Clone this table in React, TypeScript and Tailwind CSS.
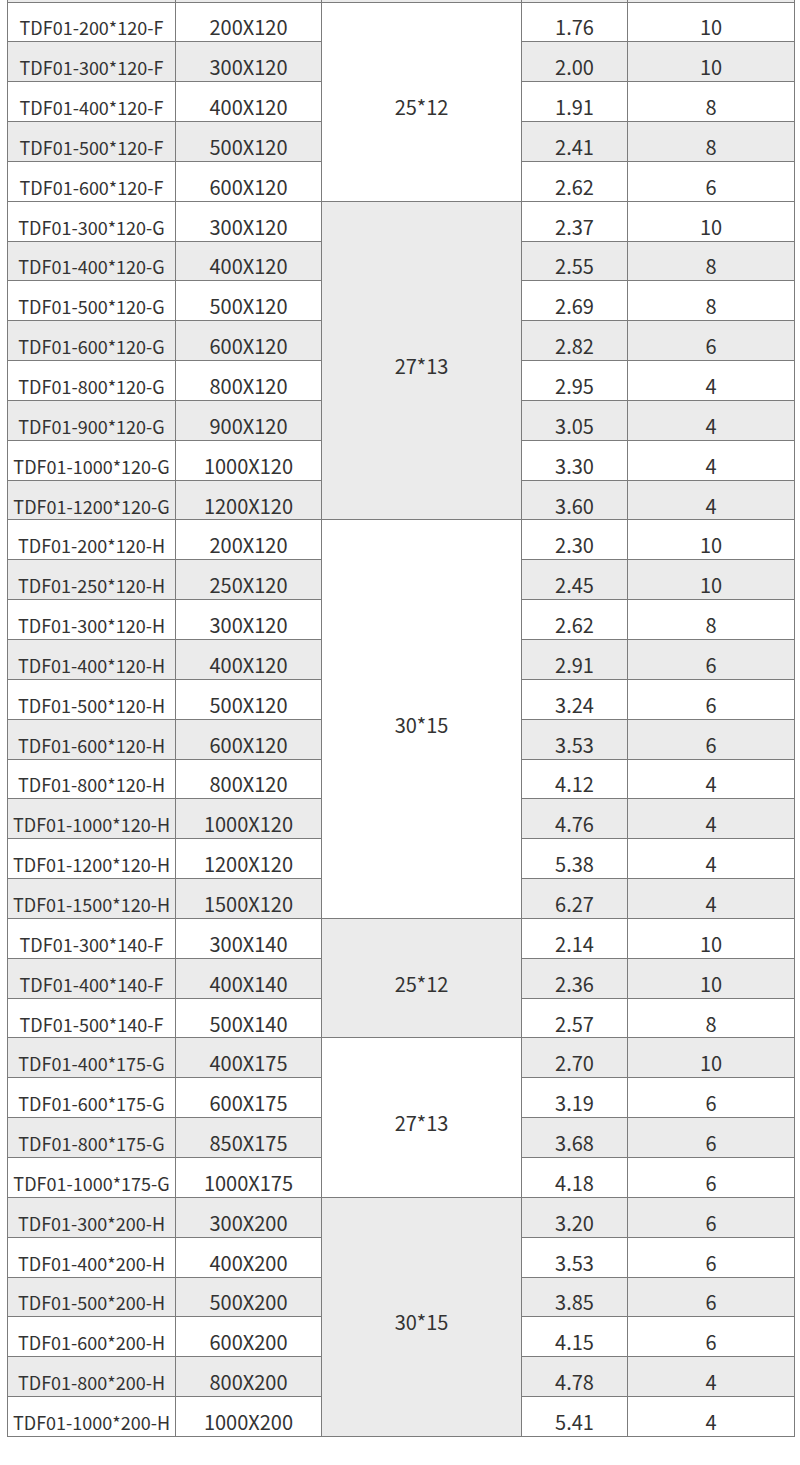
import React from 'react';

type Row = { model: string; size: string; weight: string; qty: string; gray: boolean };
type Group = { section: string; gray: boolean; rows: Row[] };

const r = (model: string, size: string, weight: string, qty: string, gray: boolean): Row => ({
  model,
  size,
  weight,
  qty,
  gray,
});

const groups: Group[] = [
  {
    section: '25*12',
    gray: false,
    rows: [
      r('TDF01-200*120-F', '200X120', '1.76', '10', false),
      r('TDF01-300*120-F', '300X120', '2.00', '10', true),
      r('TDF01-400*120-F', '400X120', '1.91', '8', false),
      r('TDF01-500*120-F', '500X120', '2.41', '8', true),
      r('TDF01-600*120-F', '600X120', '2.62', '6', false),
    ],
  },
  {
    section: '27*13',
    gray: true,
    rows: [
      r('TDF01-300*120-G', '300X120', '2.37', '10', false),
      r('TDF01-400*120-G', '400X120', '2.55', '8', true),
      r('TDF01-500*120-G', '500X120', '2.69', '8', false),
      r('TDF01-600*120-G', '600X120', '2.82', '6', true),
      r('TDF01-800*120-G', '800X120', '2.95', '4', false),
      r('TDF01-900*120-G', '900X120', '3.05', '4', true),
      r('TDF01-1000*120-G', '1000X120', '3.30', '4', false),
      r('TDF01-1200*120-G', '1200X120', '3.60', '4', true),
    ],
  },
  {
    section: '30*15',
    gray: false,
    rows: [
      r('TDF01-200*120-H', '200X120', '2.30', '10', false),
      r('TDF01-250*120-H', '250X120', '2.45', '10', true),
      r('TDF01-300*120-H', '300X120', '2.62', '8', false),
      r('TDF01-400*120-H', '400X120', '2.91', '6', true),
      r('TDF01-500*120-H', '500X120', '3.24', '6', false),
      r('TDF01-600*120-H', '600X120', '3.53', '6', true),
      r('TDF01-800*120-H', '800X120', '4.12', '4', false),
      r('TDF01-1000*120-H', '1000X120', '4.76', '4', true),
      r('TDF01-1200*120-H', '1200X120', '5.38', '4', false),
      r('TDF01-1500*120-H', '1500X120', '6.27', '4', true),
    ],
  },
  {
    section: '25*12',
    gray: true,
    rows: [
      r('TDF01-300*140-F', '300X140', '2.14', '10', false),
      r('TDF01-400*140-F', '400X140', '2.36', '10', true),
      r('TDF01-500*140-F', '500X140', '2.57', '8', false),
    ],
  },
  {
    section: '27*13',
    gray: false,
    rows: [
      r('TDF01-400*175-G', '400X175', '2.70', '10', true),
      r('TDF01-600*175-G', '600X175', '3.19', '6', false),
      r('TDF01-800*175-G', '850X175', '3.68', '6', true),
      r('TDF01-1000*175-G', '1000X175', '4.18', '6', false),
    ],
  },
  {
    section: '30*15',
    gray: true,
    rows: [
      r('TDF01-300*200-H', '300X200', '3.20', '6', true),
      r('TDF01-400*200-H', '400X200', '3.53', '6', false),
      r('TDF01-500*200-H', '500X200', '3.85', '6', true),
      r('TDF01-600*200-H', '600X200', '4.15', '6', false),
      r('TDF01-800*200-H', '800X200', '4.78', '4', true),
      r('TDF01-1000*200-H', '1000X200', '5.41', '4', false),
    ],
  },
];

const cell = 'border border-[#7c7c7c] p-0 pt-[11px] text-center align-middle leading-none';

export default function App() {
  return (
    <div
      className="w-[800px] h-[1465px] bg-white pl-[7px] text-[20px] text-[#333]"
      style={{ fontFamily: '"Noto Sans CJK SC", "Noto Sans", sans-serif' }}
    >
      <table className="border-collapse table-fixed w-[787px]">
        <colgroup>
          <col className="w-[168px]" />
          <col className="w-[146px]" />
          <col className="w-[200px]" />
          <col className="w-[106px]" />
          <col className="w-[167px]" />
        </colgroup>
        <tbody>
          <tr className="h-[2px] bg-[#ebebeb]">
            <td className="border-x border-[#7c7c7c] p-0" />
            <td className="border-x border-[#7c7c7c] p-0" />
            <td className="border-x border-[#7c7c7c] p-0" />
            <td className="border-x border-[#7c7c7c] p-0" />
            <td className="border-x border-[#7c7c7c] p-0" />
          </tr>
          {groups.map((g, gi) =>
            g.rows.map((row, ri) => (
              <tr key={`${gi}-${ri}`} className={`h-[39.85px] ${row.gray ? 'bg-[#ebebeb]' : 'bg-white'}`}>
                <td className={`${cell} text-[18px]`}>{row.model}</td>
                <td className={cell}>{row.size}</td>
                {ri === 0 && (
                  <td rowSpan={g.rows.length} className={`${cell} ${g.gray ? 'bg-[#ebebeb]' : 'bg-white'}`}>
                    {g.section}
                  </td>
                )}
                <td className={cell}>{row.weight}</td>
                <td className={cell}>{row.qty}</td>
              </tr>
            ))
          )}
        </tbody>
      </table>
    </div>
  );
}
